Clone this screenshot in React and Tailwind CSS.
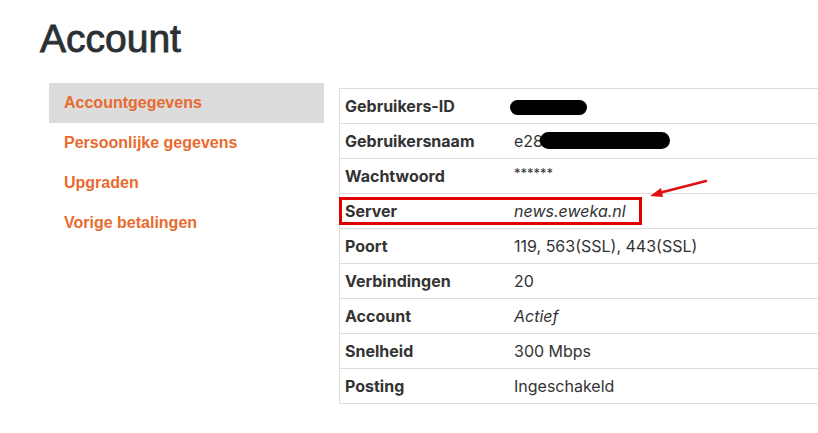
import React from "react";

const rows = [
  { label: "Gebruikers-ID", value: <span className="inline-block w-[77px] h-[15px] rounded-full bg-black align-middle ml-[-4px]" /> },
  { label: "Gebruikersnaam", value: <span className="flex items-center">e28<span className="inline-block w-[130px] h-[17px] rounded-full bg-black ml-[-3px] mt-[-2px]" /></span> },
  { label: "Wachtwoord", value: <span className="text-[13px] relative top-[-4px]">******</span> },
  { label: "Server", value: <span className="italic">news.eweka.nl</span>, highlight: true },
  { label: "Poort", value: "119, 563(SSL), 443(SSL)" },
  { label: "Verbindingen", value: "20" },
  { label: "Account", value: <span className="italic">Actief</span> },
  { label: "Snelheid", value: "300 Mbps" },
  { label: "Posting", value: "Ingeschakeld" },
];

const menu = ["Accountgegevens", "Persoonlijke gegevens", "Upgraden", "Vorige betalingen"];

export default function App() {
  return (
    <div className="w-[818px] h-[433px] overflow-hidden bg-white relative">
      <h1
        className="pl-[40px] pt-[16px] text-[39px] leading-[45px] text-[#2c3034] [-webkit-text-stroke:0.9px_#2c3034]"
        style={{ fontFamily: '"Liberation Sans", Arial, sans-serif' }}
      >
        Account
      </h1>
      <div className="flex mt-[22px] pl-[49px]">
        <div className="w-[275px] shrink-0 flex flex-col" style={{ fontFamily: '"Liberation Sans", Arial, sans-serif' }}>
          {menu.map((m, i) => (
            <div
              key={m}
              className={`h-[40px] flex items-center pl-[15px] text-[16px] font-bold text-[#e96a2e] ${i === 0 ? "bg-[#dcdcdc]" : ""}`}
            >
              {m}
            </div>
          ))}
        </div>
        <div
          className="ml-[15px] mt-[5px] flex-1 border-t border-l border-[#dddddd] text-[#333333] text-[16px]"
          style={{ fontFamily: 'Inter, "Libre Franklin", sans-serif' }}
        >
          {rows.map((r) => (
            <div key={r.label} className="relative h-[35px] flex items-center border-b border-[#dddddd]">
              <div className="w-[174px] shrink-0 pl-[5px] font-bold">{r.label}</div>
              <div className="flex-1">{r.value}</div>
              {r.highlight && (
                <>
                  <div className="absolute left-[-1px] top-[3px] w-[303px] h-[28px] border-[3px] border-[#e00000]" />
                  <svg className="absolute left-[305px] top-[-16px]" width="64" height="24" viewBox="0 0 64 24">
                    <line x1="61" y1="3" x2="14" y2="15" stroke="#e01010" strokeWidth="2.5" strokeLinecap="round" />
                    <polygon points="5,18 16,10 18,19" fill="#e01010" />
                  </svg>
                </>
              )}
            </div>
          ))}
        </div>
      </div>
    </div>
  );
}
